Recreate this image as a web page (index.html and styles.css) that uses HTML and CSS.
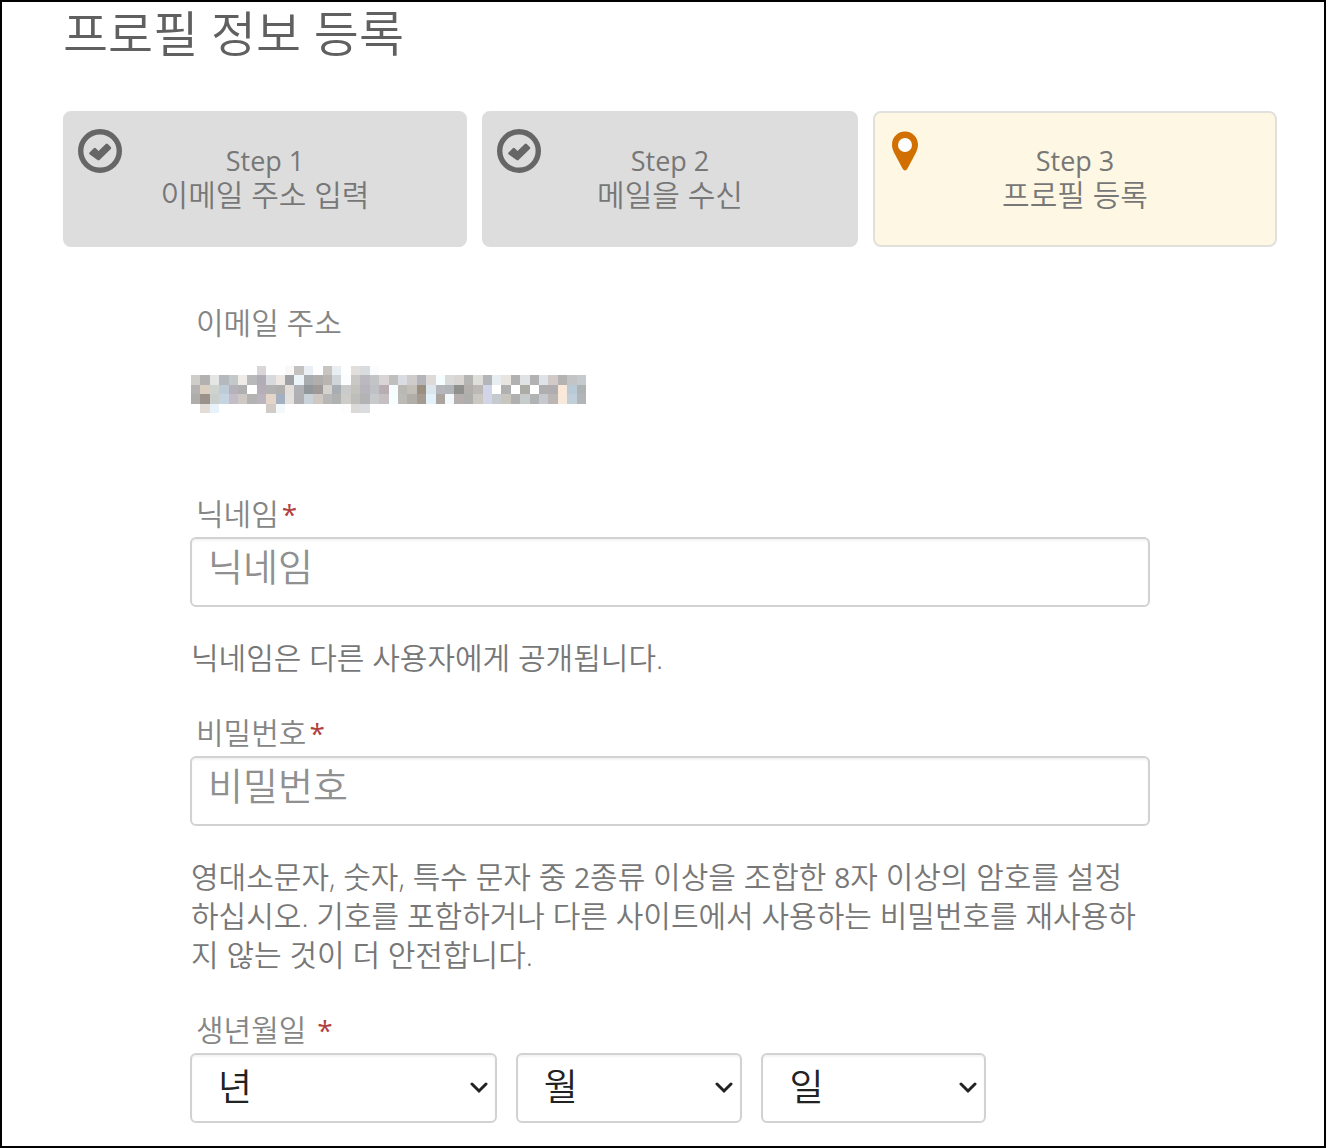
FILE: index.html
```html
<!DOCTYPE html>
<html lang="ko">
<head>
<meta charset="utf-8">
<meta name="viewport" content="width=device-width, initial-scale=1">
<title>프로필 정보 등록</title>
<link rel="stylesheet" href="styles.css">
</head>
<body>
<main class="page">
  <h1 class="title">프로필 정보 등록</h1>
  <ol class="steps">
    <li class="step">
      <svg class="step-icon" viewBox="0 0 44 44" aria-hidden="true"><circle cx="22" cy="22" r="19.300" fill="none" stroke="#666" stroke-width="5.400"/><path d="M11.500 23.500l4.300-4.300q1-.8 2 0l2.700 2.700 7.300-7q1-.8 2 0l3 3q.8 1 0 2L21.500 31q-1 .8-2 0l-8-5.700q-.8-.9 0-1.800z" fill="#666"/></svg>
      <span class="step-name">Step 1</span>
      <span>이메일 주소 입력</span>
    </li>
    <li class="step">
      <svg class="step-icon" viewBox="0 0 44 44" aria-hidden="true"><circle cx="22" cy="22" r="19.300" fill="none" stroke="#666" stroke-width="5.400"/><path d="M11.500 23.500l4.300-4.300q1-.8 2 0l2.700 2.700 7.300-7q1-.8 2 0l3 3q.8 1 0 2L21.500 31q-1 .8-2 0l-8-5.700q-.8-.9 0-1.800z" fill="#666"/></svg>
      <span class="step-name">Step 2</span>
      <span>메일을 수신</span>
    </li>
    <li class="step step-current" aria-current="step">
      <svg class="step-icon" viewBox="0 0 44 44" aria-hidden="true"><circle cx="17" cy="16" r="8" fill="#fff"/><path transform="translate(1 .5)" fill="#d17000" fill-rule="evenodd" d="M16 2C8.500 2 3 8 3 15c0 3 .8 5.500 2 8l8.500 16q2.500 4 5 0L27 23c1.200-2.500 2-5 2-8 0-7-5.500-13-13-13zm0 6.500a7 7 0 1 1 0 14 7 7 0 0 1 0-14z"/></svg>
      <span class="step-name">Step 3</span>
      <span>프로필 등록</span>
    </li>
  </ol>
  <form class="form">
    <div class="email">
      <span class="label">이메일 주소</span>
      <svg class="mosaic" id="mosaic" viewBox="0 0 42 5" preserveAspectRatio="none" shape-rendering="crispEdges" role="img" aria-label="이메일 주소"></svg>
    </div>
    <div class="field">
      <label class="label" for="nick">닉네임<span class="req">*</span></label>
      <input class="control" id="nick" type="text" placeholder="닉네임">
      <p class="help">닉네임은 다른 사용자에게 공개됩니다.</p>
    </div>
    <div class="field">
      <label class="label" for="pass">비밀번호<span class="req">*</span></label>
      <input class="control" id="pass" type="password" placeholder="비밀번호">
      <p class="help">영대소문자, 숫자, 특수 문자 중 <span class="num">2</span>종류 이상을 조합한 <span class="num">8</span>자 이상의 암호를 설정<br>하십시오. 기호를 포함하거나 다른 사이트에서 사용하는 비밀번호를 재사용하<br>지 않는 것이 더 안전합니다.</p>
    </div>
    <div class="field">
      <label class="label" for="year">생년월일 <span class="req">*</span></label>
      <div class="dates">
        <div class="select">
          <select class="control" id="year"><option>년</option></select>
          <svg class="arrow" viewBox="0 0 18 12" aria-hidden="true"><path d="M2 2l7 7 7-7"/></svg>
        </div>
        <div class="select">
          <select class="control" id="month" aria-label="월"><option>월</option></select>
          <svg class="arrow" viewBox="0 0 18 12" aria-hidden="true"><path d="M2 2l7 7 7-7"/></svg>
        </div>
        <div class="select">
          <select class="control" id="day" aria-label="일"><option>일</option></select>
          <svg class="arrow" viewBox="0 0 18 12" aria-hidden="true"><path d="M2 2l7 7 7-7"/></svg>
        </div>
      </div>
    </div>
  </form>
</main>
<script src="mosaic.js"></script>
</body>
</html>
```
FILE: styles.css
```css
* {
  box-sizing: border-box;
}

body {
  margin: 0;
  background: #fff;
  color: #777;
  font: 350 30px/39px "Open Sans", "Noto Sans CJK KR", sans-serif;
}

.page {
  min-height: 100vh;
  padding: 0 47px 22px 61px;
  border: 2px solid #000;
}

.title {
  margin: 0 0 47px;
  color: #606060;
  font-size: 49px;
  font-weight: 350;
  line-height: 62px;
}

.steps {
  display: grid;
  grid-template-columns: 404fr 376fr 404fr;
  gap: 15px;
  margin: 0 0 56px;
  padding: 0;
  list-style: none;
}

.step {
  position: relative;
  display: flex;
  flex-direction: column;
  align-items: center;
  padding: 31px 20px 33px;
  border: 2px solid #ddd;
  border-radius: 8px;
  background: #ddd;
  line-height: 34px;
}

.step-current {
  border-color: #e0e0dc;
  background: #fdf7e3;
}

.step-icon {
  position: absolute;
  top: 16px;
  left: 13px;
  width: 44px;
  height: 44px;
}

.step-name {
  font-size: 27px;
  font-weight: 400;
}

.num,
.req {
  font-size: 28px;
  font-weight: 400;
  line-height: 1;
}

.form {
  padding: 0 127px;
}

.label {
  display: block;
  padding-left: 6px;
  color: #858585;
}

.req {
  margin-left: 3px;
  color: #b04040;
}

.email {
  margin-bottom: 81px;
}

.mosaic {
  display: block;
  width: 395px;
  height: 47px;
  margin: 24px 0 0 1px;
}

.field {
  margin-bottom: 36px;
}

.field:last-child {
  margin-bottom: 0;
}

.control {
  display: block;
  width: 100%;
  height: 70px;
  margin-top: 4px;
  padding: 0 16px 12px;
  border: 2px solid #d2d2d2;
  border-radius: 6px;
  background: #fff;
  box-shadow: inset 0 2px 2px #f4f4f4;
  color: #222;
  font: inherit;
  font-size: 38px;
}

.control::placeholder {
  color: #909090;
  opacity: 1;
}

.help {
  margin: 31px 0 0;
  padding-left: 1px;
}

.dates {
  display: grid;
  grid-template-columns: 307fr 227fr 225fr 145fr;
  gap: 19px;
}

.select {
  display: grid;
  align-items: center;
}

.select .control,
.arrow {
  grid-area: 1 / 1;
}

.select .control {
  padding: 0 26px 4px;
  font-size: 37px;
  appearance: none;
}

.arrow {
  justify-self: end;
  width: 18px;
  height: 12px;
  margin: 4px 9px 0 0;
  fill: none;
  stroke: #222;
  stroke-width: 3;
  stroke-linecap: round;
  pointer-events: none;
}
```
FILE: mosaic.js
```javascript
// Colours of the pixelated e-mail address, one row per string; "-" is an empty cell.
const rows = [
  "- - - - - - - d9d5d9 - - faf8f6 c3c2c1 e9eff4 - c8c4c0 e9eef2 - e0dfdc d9dcdf fbfcfd",
  "cfcdc9 b2b1af e4e6e6 b5b8bc c3c8cb f0ebe6 b8b9bb b0adb6 d8d9dc ece7e1 9fa0a3 ecf4f9 a9acaf b0afad b9b4af d0d5da fbfdfe c9c8c5 bbb8bf c3c4c6 d9d5d7 bfbfbe d9dde3 d0cccb b3b5bb dddad8 f6fdff dadada d9d5d3 b5b5b3 dededa b4b5bb e7eef2 e8e5e0 b1b1b2 dfe3e3 b2b2b3 dde3e8 d1cac8 b4b3b2 c2c4c5 c5cbcd",
  "b4b3b1 dacfc0 ced3d0 bdccd7 b5b2b9 b0b0b1 ffffff b5adb8 b2b2b2 afafaf e3deda b0b1b4 92979c 9f9a97 d4d2cc a8acb3 c9cac9 c3c2bd b7b4bc bfc1c6 b9acb3 f5fdff b9b8b2 c3beb8 9b8f82 dce6ed b4b6bc b1b4b9 90908f b3afad bab9b5 d0d6e8 ffffff b0b0b0 ffffff adaba6 ffffff b0adae afadb0 fae8d8 b9cad7 adb2b3",
  "aeadab 9b928b cbcfcb c6d3e0 c3bdc7 cdc8c3 b3b3b4 b9b4be e5d5c8 a4afbf e4e0dc b0b0b3 cad3d9 cfc8c2 b7b7b8 b0b1b1 cdccc9 bdbdb9 b3b3b5 c7c9ca c5bfc2 f7feff bbbab6 b1ada9 a59b90 e3f1fa aaa39e f3f8fb b4aeac aeaeac cac8c0 d1d5e5 c4cacd c8c5bf b0b0b0 c6cbcc b1b2b2 c6c8cd bbb5b4 f9e9da c0cfda b2b5b7",
  "- e4dcd6 e7f2fb - - - - - d1cac5 f3f8fb - - - - - - fdfdfd dcdad8 dadcdf"
];

const mosaic = document.getElementById("mosaic");
rows.forEach((row, y) => {
  row.split(" ").forEach((colour, x) => {
    if (colour === "-") return;
    const cell = document.createElementNS("http://www.w3.org/2000/svg", "rect");
    cell.setAttribute("x", x);
    cell.setAttribute("y", y);
    cell.setAttribute("width", 1);
    cell.setAttribute("height", 1);
    cell.setAttribute("fill", "#" + colour);
    mosaic.append(cell);
  });
});
```
